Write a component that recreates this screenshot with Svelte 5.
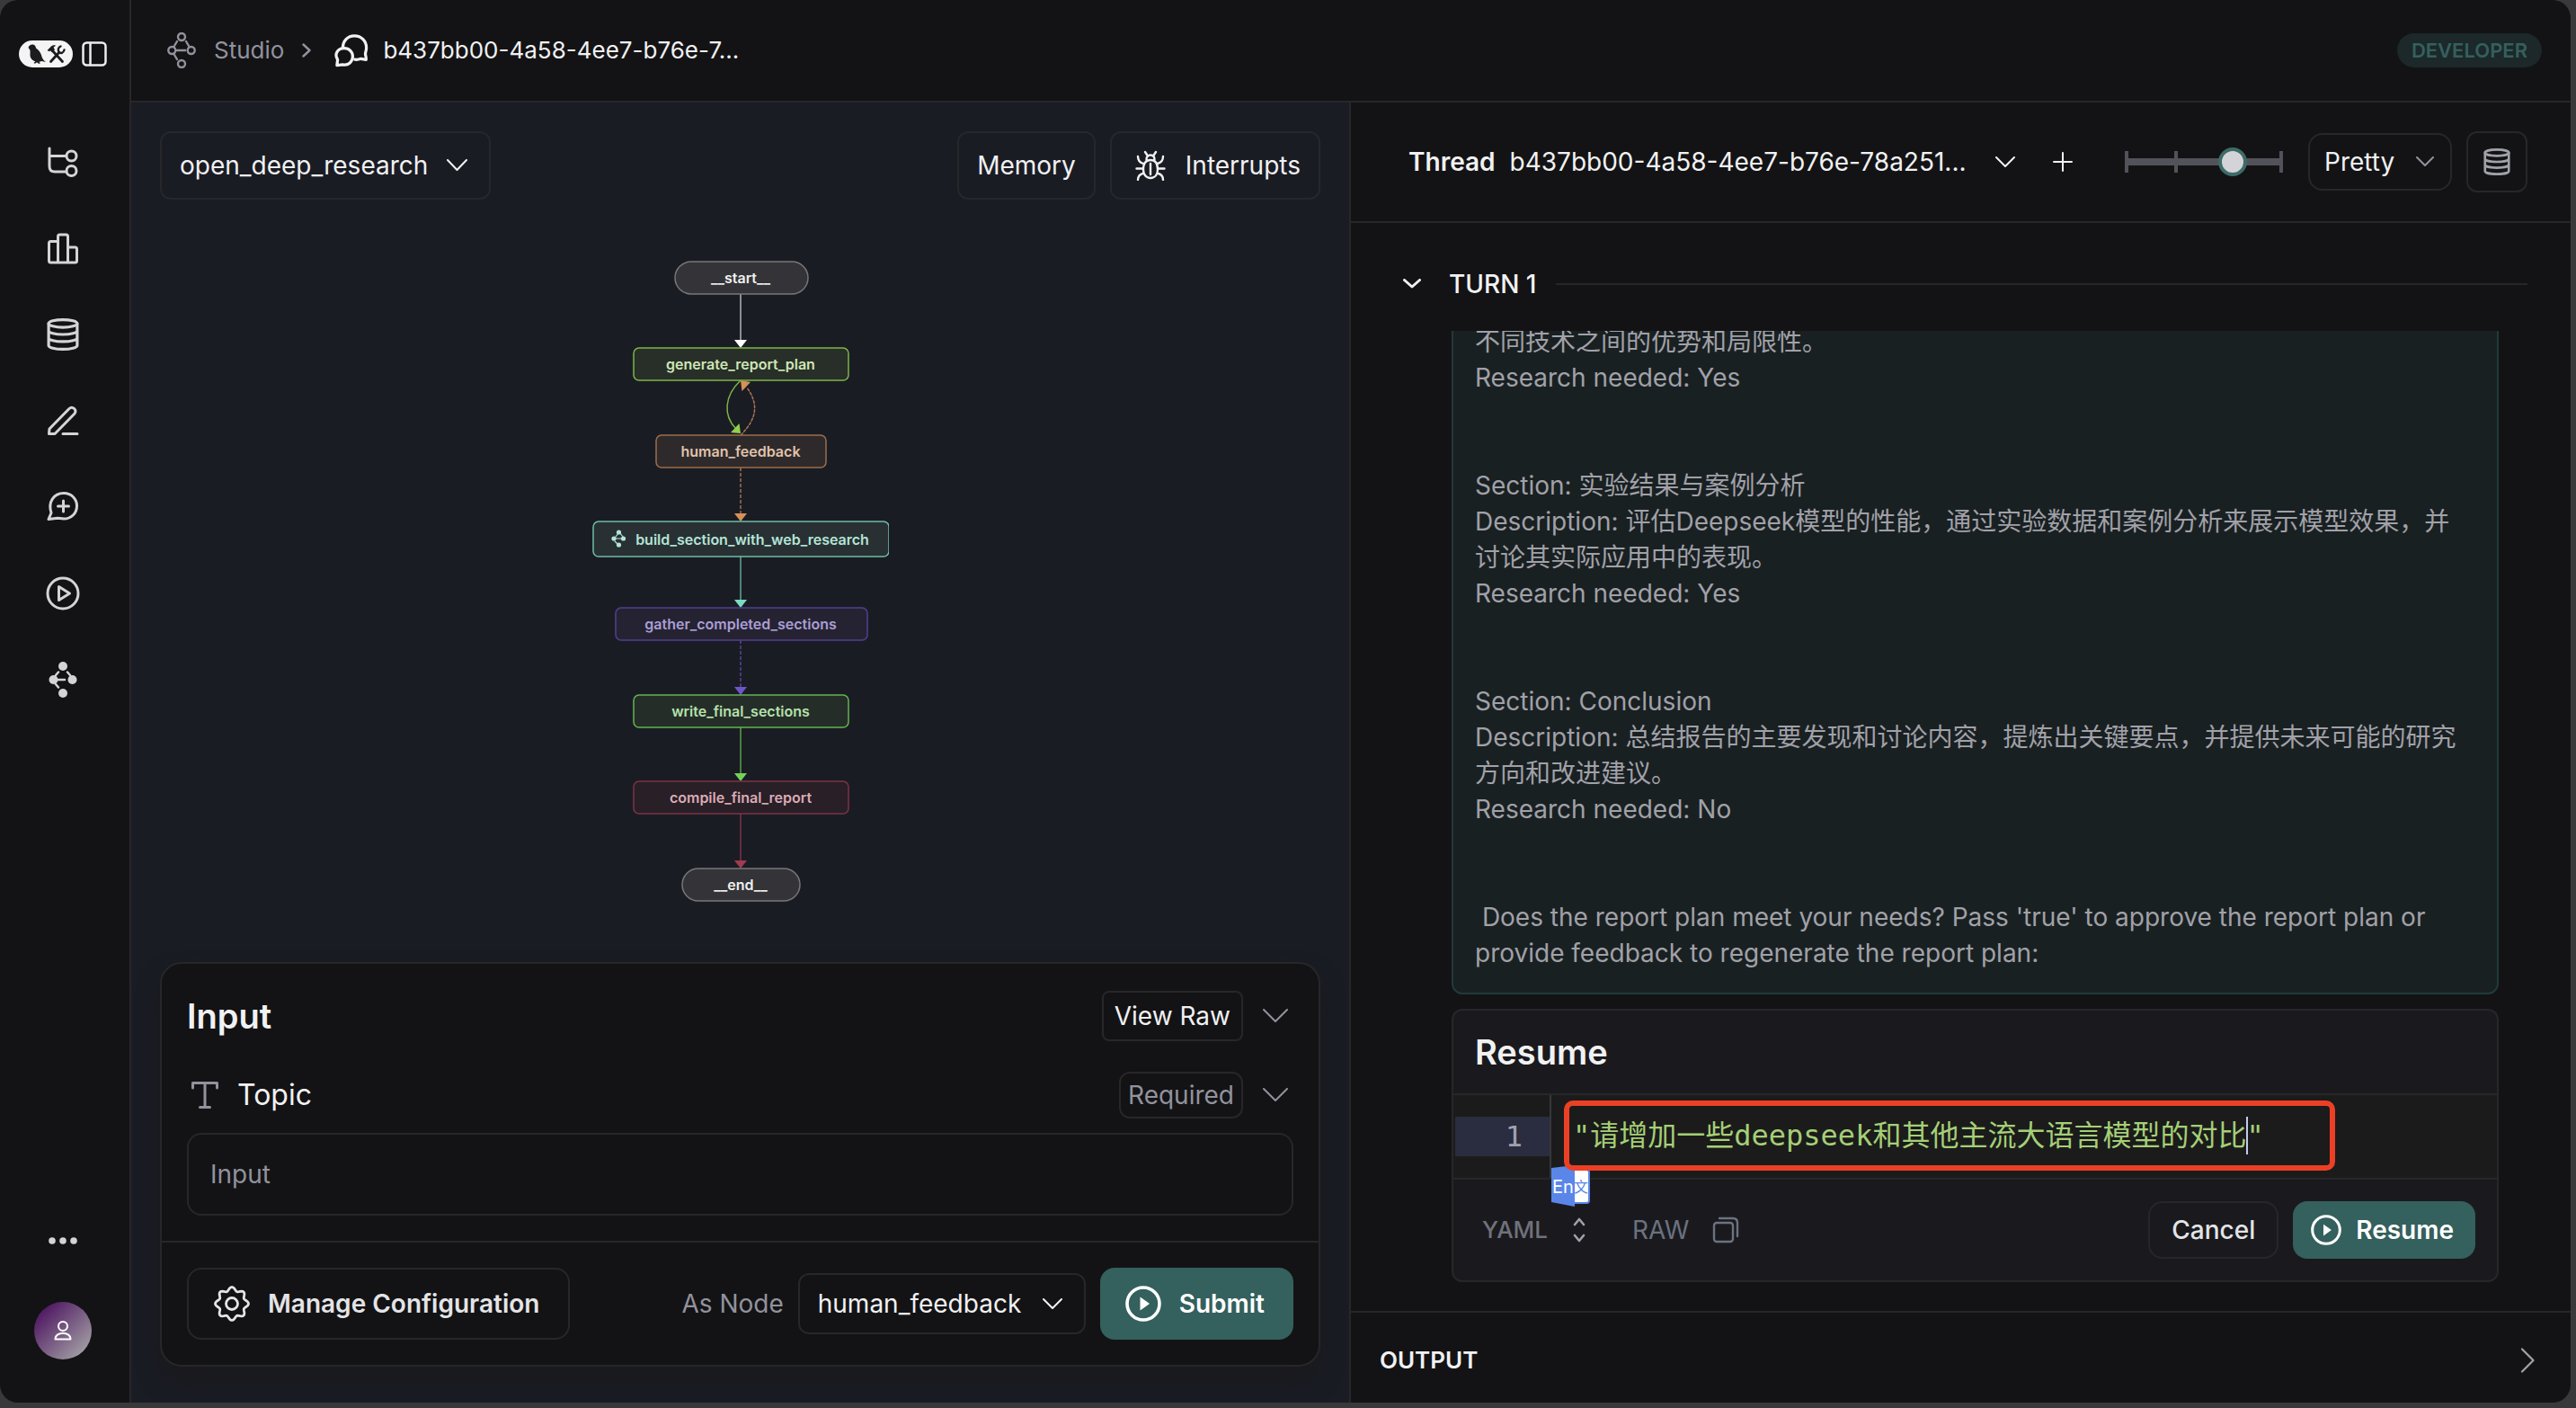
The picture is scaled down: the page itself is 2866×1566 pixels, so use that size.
<script lang="ts">
  type Node = { label: string; x: number; y: number; w: number; h: number; round?: boolean; line: string; fill: string; text: string };

  const nodes: Node[] = [
    { label: '__start__', x: 91, y: 11, w: 148, h: 36, round: true, line: '#77777a', fill: '#343438', text: '#f0f0f0' },
    { label: 'generate_report_plan', x: 45, y: 107, w: 239, h: 36, line: '#7cb545', fill: '#272f28', text: '#cfe6b4' },
    { label: 'human_feedback', x: 70, y: 204, w: 189, h: 36, line: '#9c6e4b', fill: '#2e2a2b', text: '#e0c3ac' },
    { label: 'build_section_with_web_research', x: 0, y: 300, w: 329, h: 39, line: '#6dbda6', fill: '#283034', text: '#b5e4d6' },
    { label: 'gather_completed_sections', x: 25, y: 396, w: 280, h: 36, line: '#513f92', fill: '#252331', text: '#ab9ed6' },
    { label: 'write_final_sections', x: 45, y: 493, w: 239, h: 36, line: '#64b44f', fill: '#252d29', text: '#b5e2a9' },
    { label: 'compile_final_report', x: 45, y: 589, w: 239, h: 36, line: '#7e3344', fill: '#281f27', text: '#dcabb5' },
    { label: '__end__', x: 99, y: 686, w: 131, h: 36, round: true, line: '#77777a', fill: '#343438', text: '#f0f0f0' }
  ];

  const edges = [
    { from: 47, to: 107, line: '#8d8d90', head: '#ffffff', dashed: false },
    { from: 240, to: 300, line: '#7d5b45', head: '#d59159', dashed: true },
    { from: 339, to: 396, line: '#4d8478', head: '#7dd9bf', dashed: false },
    { from: 432, to: 493, line: '#443a78', head: '#6f55cb', dashed: true },
    { from: 529, to: 589, line: '#48803d', head: '#72d35a', dashed: false },
    { from: 625, to: 686, line: '#652c3c', head: '#a03b50', dashed: false }
  ];

  const gear = Array.from({ length: 97 }, (_, i) => {
    const a = (i / 96) * Math.PI * 2;
    const r = 16.5 + 2 * Math.cos(8 * a);
    return `${i ? 'L' : 'M'}${(20 + r * Math.sin(a)).toFixed(2)} ${(20 - r * Math.cos(a)).toFixed(2)}`;
  }).join('') + 'Z';

  const message = `不同技术之间的优势和局限性。
Research needed: Yes


Section: 实验结果与案例分析
Description: 评估Deepseek模型的性能，通过实验数据和案例分析来展示模型效果，并
讨论其实际应用中的表现。
Research needed: Yes


Section: Conclusion
Description: 总结报告的主要发现和讨论内容，提炼出关键要点，并提供未来可能的研究
方向和改进建议。
Research needed: No


 Does the report plan meet your needs? Pass 'true' to approve the report plan or
provide feedback to regenerate the report plan:`;

  let topic = $state('');
  let detail = $state(72);
  let reply = $state('"请增加一些deepseek和其他主流大语言模型的对比"');
</script>

{#snippet chevron(w: number, h: number, s: number)}
  <svg class="chev" width={w} height={h} viewBox="0 0 {w} {h}" aria-hidden="true">
    <path d="M{s / 2} {s / 2}L{w / 2} {h - s}L{w - s / 2} {s / 2}" stroke-width={s} />
  </svg>
{/snippet}

{#snippet database(w: number, s: number)}
  <svg width={w} height={w} viewBox="0 0 34 34" stroke-width={s} aria-hidden="true">
    <ellipse cx="17" cy="5.5" rx="15" ry="4" />
    <path d="M2 5.5v23c0 2.2 6.700 4 15 4s15-1.800 15-4v-23M2 13c0 2.200 6.700 4 15 4s15-1.800 15-4M2 20.500c0 2.200 6.700 4 15 4s15-1.800 15-4" />
  </svg>
{/snippet}

{#snippet play(w: number)}
  <svg width={w} height={w} viewBox="0 0 40 40" stroke-width="3.6" aria-hidden="true">
    <circle cx="20" cy="20" r="18" />
    <path d="M16.500 12.500v15l10.500-7.500z" fill="currentColor" stroke="none" />
  </svg>
{/snippet}

<div class="app">
  <nav class="sidebar" aria-label="Main">
    <div class="brand">
      <svg width="60" height="30" viewBox="0 0 60 30" aria-label="LangSmith">
        <rect width="60" height="30" rx="15" fill="#f4f4f5" stroke="none" />
        <path d="M10.500 8c.7-2.600 3-4 5.300-3.500 2 .5 3 2 3.200 4 2.500 1.500 5.500 5 6.200 8.500.5 2.500 2 5 4.800 7l-4.500-1-2.800.7 1 2.300-2.200-.5-1.500-1.300-2 1.600-1.500-.8 1.800-1.800c-4-1.200-6-4-5.800-8 .1-2 .2-3.600-.3-5z" fill="#1c1c1e" stroke="none" />
        <path d="M37 11L48.500 23.500M35.500 23.500L45 13" stroke="#1c1c1e" stroke-width="2.800" />
        <path d="M31.500 11l4.500-4.500c1.500-1.300 3.500-1.500 5-.8l-2.500 2 1.500 2.500-3 3-2-2-1 1z" fill="#1c1c1e" stroke="none" />
        <path d="M46.500 6.500c-2.500 1-3.500 4-2 6.500 2 2 5 1 6-2.500" stroke="#1c1c1e" stroke-width="2.400" />
      </svg>
      <button class="bare" aria-label="Toggle sidebar">
        <svg width="28" height="28" viewBox="0 0 28 28" stroke-width="2.500"><rect x="1.500" y="1.500" width="25" height="25" rx="4" /><path d="M9.500 2v24" /></svg>
      </button>
    </div>
    <div class="links">
      <a href="#projects" aria-label="Tracing projects">
        <svg width="36" height="36" viewBox="0 0 36 36"><path d="M3 3v20c0 4 2 6 6 6h12M3 11.500h18" /><circle cx="27.500" cy="11.500" r="5.500" /><circle cx="27.500" cy="28" r="5.500" /></svg>
      </a>
      <a href="#monitoring" aria-label="Monitoring">
        <svg width="36" height="36" viewBox="0 0 36 36"><path d="M12.500 34H4.500Q2.500 34 2.500 32V12.500Q2.500 10.500 4.500 10.500H12.500M12.500 34V5Q12.500 3 14.500 3H21.500Q23.500 3 23.500 5V34M23.500 17H31.500Q33.500 17 33.500 19V32Q33.500 34 31.500 34H12.500" /></svg>
      </a>
      <a href="#datasets" aria-label="Datasets">{@render database(36, 3)}</a>
      <a href="#annotate" aria-label="Annotation queues">
        <svg width="36" height="36" viewBox="0 0 36 36"><path d="M3 27l22-22.500c3.500-3.300 9 1 6 5.500L9 32.500H2.500zM18 32.500h16" /></svg>
      </a>
      <a href="#prompts" aria-label="Prompts">
        <svg width="36" height="36" viewBox="0 0 36 36"><path d="M2 31.500l3-7C1 12 8 2.500 19 2.500c8.500 0 14.500 6.500 14.500 14.200C33.500 25 27 31 19 31c-3 0-5-.8-7-.8zM18.500 11v12M12.500 17h12" /></svg>
      </a>
      <a href="#playground" aria-label="Playground">
        <svg width="38" height="38" viewBox="0 0 38 38"><circle cx="19" cy="19" r="17" /><path d="M14.500 11.500v15l12-7.500z" /></svg>
      </a>
      <a href="#deployments" aria-label="Deployments">
        <svg width="32" height="40" viewBox="0 0 32 40"><g fill="currentColor" stroke="none"><circle cx="16" cy="5" r="5" /><circle cx="5.500" cy="20" r="5" /><circle cx="26.500" cy="20" r="5" /><circle cx="16" cy="35" r="5" /></g><path d="M8 15l3-3.500M24 15l-3-3.500M10 20h8M8 25l3 3.500" stroke-width="2.500" /></svg>
      </a>
    </div>
    <button class="bare more" aria-label="More">
      <svg width="32" height="10" viewBox="0 0 32 10"><g fill="currentColor" stroke="none"><circle cx="4" cy="5" r="3.800" /><circle cx="16" cy="5" r="3.800" /><circle cx="28" cy="5" r="3.800" /></g></svg>
    </button>
    <button class="bare avatar" aria-label="Account">
      <svg width="20" height="22" viewBox="0 0 20 22" stroke-width="2"><circle cx="10" cy="6" r="5" /><path d="M1.500 20.500c0-9 17-9 17 0z" /></svg>
    </button>
  </nav>

  <div class="body">
    <header class="top">
      <svg class="dim" width="32" height="40" viewBox="0 0 32 40" stroke-width="2.400" aria-hidden="true"><circle cx="16" cy="5" r="4" /><circle cx="5.300" cy="20" r="4" /><circle cx="26.700" cy="20" r="4" /><circle cx="16" cy="35" r="4" /><path d="M8 15l3-5M24 15l-3-5M11 20h9M8 25l3 5" /></svg>
      <a class="dim" href="#studio">Studio</a>
      <svg class="dim" width="10" height="16" viewBox="0 0 10 16" stroke-width="2.400" aria-hidden="true"><path d="M1.500 1.500L8.500 8l-7 6.500" /></svg>
      <svg class="chat" width="38" height="38" viewBox="0 0 40 40" stroke-width="3.400" aria-hidden="true"><path d="M10 16.500C10 9 15.500 3 23.500 3S37.500 9 37.500 17c0 3-1.200 5.500-1.200 7 0 2 1.200 4 .9 7l-6.200-1.200c-2 .8-4.500 1.200-7 .9" /><path d="M3 37.500l.8-6.500C-.5 24 4 17.500 11.500 17.500c6 0 10 4.500 10 9.700 0 6-5 10.800-11.500 9.500z" /></svg>
      <span>b437bb00-4a58-4ee7-b76e-7...</span>
      <span class="badge">DEVELOPER</span>
    </header>

    <main class="split">
      <section class="canvas" aria-label="Graph">
        <div class="tools">
          <div class="pick agent">
            <select aria-label="Assistant"><option>open_deep_research</option></select>
            {@render chevron(23, 14, 2)}
          </div>
          <button class="outline">Memory</button>
          <button class="outline bug">
            <svg width="34" height="34" viewBox="0 0 34 34" stroke-width="2.400" aria-hidden="true"><path d="M17 31c-5 0-8-4-8-9.500S11 11 17 11s8 5 8 10.500S22 31 17 31zM17 15v12M12.500 10.500c0-3.500 2-5 4.500-5s4.500 1.500 4.500 5M13 5l-2-3M21 5l2-3M9.500 15C5 14 3 12 3 7M24.500 15C29 14 31 12 31 7M9 20.500H1.500M25 20.500h7.500M9.500 25.500C5.500 26.500 3 29 3 33M24.500 25.500c4 1 6.500 3.500 6.500 7.500" /></svg>
            Interrupts
          </button>
        </div>

        <div class="graph">
          <svg width="330" height="724" viewBox="0 0 330 724" role="img" aria-label="Agent graph">
            {#each edges as e}
              <path d="M165 {e.from}V{e.to - 8}" stroke={e.line} stroke-width="2" stroke-linecap="butt" stroke-dasharray={e.dashed ? '4 2' : undefined} />
              <path d="M158 {e.to - 9}h14l-7 9z" fill={e.head} stroke="none" />
            {/each}
            <path d="M165 143C147 160 145 182 160 197" stroke="#7cb545" stroke-width="1.500" />
            <path d="M165 202l-11-1 9.500-10z" fill="#93cf4f" stroke="none" />
            <path d="M165 204C185 184 184 168 172 151" stroke="#a87550" stroke-width="1.500" stroke-dasharray="3 2" />
            <path d="M165 143l11 2-9.500 10z" fill="#d59159" stroke="none" />
            {#each nodes as n}
              <rect x={n.x + 1} y={n.y} width={n.w} height={n.h} rx={n.round ? 18 : 6} fill={n.fill} stroke={n.line} stroke-width="1.500" />
              <text x={n.w > 320 ? 178 : 165} y={n.y + n.h / 2 + 6} fill={n.text}>{n.label}</text>
            {/each}
            <g stroke="#b5e4d6" stroke-width="1.200"><path d="M26 317l3-4M34 317l-3-4M26 319h6M25 322l4 4" /><g fill="#b5e4d6" stroke="none"><circle cx="29.500" cy="312" r="2.600" /><circle cx="24" cy="319" r="2.600" /><circle cx="34.500" cy="319" r="2.600" /><circle cx="29.500" cy="326" r="2.600" /></g></g>
          </svg>
        </div>

        <form class="card">
          <div class="fields">
            <div class="row head">
              <h2>Input</h2>
              <button type="button" class="outline raw">View Raw</button>
              <button type="button" class="bare dim" aria-label="Collapse input">{@render chevron(28, 16, 2)}</button>
            </div>
            <div class="row sub">
              <svg class="dim" width="38" height="34" viewBox="0 0 38 34" stroke-width="3" aria-hidden="true"><path d="M6.500 9V3.500h27V9M20 3.500v27M14.500 30.500h11" /></svg>
              <label for="topic">Topic</label>
              <span class="required">Required</span>
              <button type="button" class="bare dim" aria-label="Collapse topic">{@render chevron(28, 16, 2)}</button>
            </div>
            <input id="topic" class="topic" placeholder="Input" bind:value={topic} />
          </div>
          <div class="actions">
            <button type="button" class="outline manage">
              <svg width="40" height="40" viewBox="0 0 40 40" stroke-width="2.800" aria-hidden="true"><path d={gear} /><circle cx="20" cy="20" r="6.500" /></svg>
              Manage Configuration
            </button>
            <label class="dim asnode" for="asnode">As Node</label>
            <div class="pick node">
              <select id="asnode"><option>human_feedback</option></select>
              {@render chevron(22, 13, 2)}
            </div>
            <button type="button" class="primary submit">{@render play(40)}Submit</button>
          </div>
        </form>
      </section>

      <section class="thread" aria-label="Thread">
        <div class="threadbar">
          <strong>Thread</strong>
          <button class="bare idpick">b437bb00-4a58-4ee7-b76e-78a251...{@render chevron(22, 13, 2)}</button>
          <button class="bare plus" aria-label="New thread">
            <svg width="22" height="22" viewBox="0 0 22 22" stroke-width="2"><path d="M11 1v20M1 11h20" /></svg>
          </button>
          <input class="range" type="range" min="0" max="100" aria-label="Detail level" bind:value={detail} />
          <div class="pick pretty">
            <select aria-label="Format"><option>Pretty</option></select>
            <span class="dim">{@render chevron(20, 12, 2)}</span>
          </div>
          <button class="outline db" aria-label="Store">{@render database(30, 3)}</button>
        </div>

        <div class="turn">
          <button class="bare">{@render chevron(20, 12, 3)}TURN 1</button>
          <hr />
        </div>

        <div class="scroll">
          <div class="message">{message}</div>
          <div class="resume">
            <h2>Resume</h2>
            <div class="editor">
              <div class="gutter"><span>1</span></div>
              <div class="code">
                <svg class="translate" width="43" height="46" viewBox="0 0 43 46" aria-hidden="true">
                  <rect x="18" y="5" width="24" height="37" rx="3" fill="#fff" stroke="#5a86ea" stroke-width="2" />
                  <path d="M0 3L26 0V46L0 41z" fill="#5a86ea" stroke="none" />
                  <text x="13" y="31" fill="#fff" font-size="20">En</text>
                  <text x="33" y="30" fill="#5a86ea" font-size="16">文</text>
                </svg>
                <div class="mark">
                  <input aria-label="Resume value" spellcheck="false" bind:value={reply} />
                  <i class="caret"></i>
                </div>
              </div>
            </div>
            <div class="foot">
              <div class="yaml">
                <select aria-label="Language"><option>YAML</option></select>
                <svg width="14" height="28" viewBox="0 0 14 28" stroke-width="2.600" aria-hidden="true"><path d="M2 8l5-6 5 6M2 20l5 6 5-6" /></svg>
              </div>
              <button class="bare copy">RAW
                <svg width="30" height="30" viewBox="0 0 30 30" stroke-width="2.400" aria-hidden="true"><rect x="2" y="7" width="21" height="21" rx="3" /><path d="M8 2h15q5 0 5 5v15" /></svg>
              </button>
              <button class="outline cancel">Cancel</button>
              <button class="primary go">{@render play(34)}Resume</button>
            </div>
          </div>
        </div>

        <button class="bare output">OUTPUT
          <svg width="16" height="28" viewBox="0 0 16 28" stroke-width="2.200" aria-hidden="true"><path d="M2 1.500L14.500 14 2 26.500" /></svg>
        </button>
      </section>
    </main>
  </div>
</div>

<style>
  :global(body) { background: #39393b; }
  * { box-sizing: border-box; }
  .app {
    --line: #27272a;
    --dim: #92929d;
    display: flex;
    height: calc(100vh - 6px);
    margin-right: 6px;
    background: #131315;
    border-radius: 20px;
    overflow: hidden;
    color: #f1f1f2;
    font: 28px/40px Inter, "Noto Sans CJK SC", sans-serif;
  }
  svg { display: block; flex: none; fill: none; stroke: currentColor; stroke-linecap: round; stroke-linejoin: round; }
  button, input, select { font: inherit; color: inherit; margin: 0; }
  button { white-space: nowrap; }
  select { appearance: none; border: 0; background: transparent; padding: 0; }
  a { color: inherit; text-decoration: none; }
  h2 { margin: 0; font-size: 38px; line-height: 48px; font-weight: 600; }
  .bare { border: 0; background: transparent; padding: 0; display: flex; align-items: center; }
  .dim { color: var(--dim); }
  .outline { display: flex; align-items: center; justify-content: center; border: 2px solid var(--line); border-radius: 12px; background: transparent; }
  .primary { display: flex; align-items: center; justify-content: center; border: 0; border-radius: 16px; background: #34605d; color: #fff; font-weight: 600; }
  .pick { display: flex; align-items: center; justify-content: space-between; border: 2px solid var(--line); border-radius: 12px; }

  .sidebar { flex: none; width: 146px; border-right: 2px solid var(--line); display: flex; flex-direction: column; padding: 45px 4px 48px 0; align-items: center; color: #d4d4d8; }
  .brand { display: flex; align-items: center; gap: 10px; }
  .brand .bare { color: #ededee; }
  .links { display: flex; flex-direction: column; gap: 56px; margin-top: 85px; }
  .links a { display: flex; width: 40px; height: 40px; align-items: center; justify-content: center; }
  .links svg { stroke-width: 3; }
  .more { margin-top: auto; }
  .avatar { width: 64px; height: 64px; margin-top: 63px; border-radius: 50%; justify-content: center; color: #fff; background: linear-gradient(135deg, #4c1360 10%, #a3a0a5 90%); }

  .body { flex: 1; min-width: 0; display: flex; flex-direction: column; }
  .top { flex: none; height: 114px; border-bottom: 2px solid var(--line); display: flex; align-items: center; gap: 20px; padding: 0 32px 0 40px; font-size: 26px; }
  .chat { margin-left: 6px; }
  .chat + span { margin-left: -4px; }
  .badge { margin-left: auto; padding: 0 16px; border-radius: 19px; background: #1c2829; color: #34605d; font-size: 22px; line-height: 38px; font-weight: 600; }

  .split { flex: 1; min-height: 0; display: grid; grid-template: minmax(0, 1fr) / repeat(2, minmax(0, 1fr)); }
  .canvas { display: flex; flex-direction: column; padding: 32px 32px 40px; border-right: 2px solid var(--line); background: #1a1c24; }
  .tools { display: flex; gap: 16px; }
  .tools > * { height: 76px; }
  .agent { width: 368px; padding: 0 24px 0 20px; margin-right: auto; }
  .tools .outline { padding: 0 20px; }
  .bug { gap: 22px; }
  .tools .bug { padding-left: 26px; }
  .graph { flex: 1; display: flex; justify-content: center; padding-top: 58px; min-height: 0; }
  .graph text { stroke: none; font-size: 16px; line-height: 20px; font-weight: 600; text-anchor: middle; }

  .card { flex: none; border: 2px solid var(--line); border-radius: 24px; background: #131315; box-shadow: 0 16px 24px #1a1a1d; }
  .fields { padding: 30px 28px 28px; display: flex; flex-direction: column; border-bottom: 2px solid var(--line); }
  .row { display: flex; align-items: center; padding-right: 6px; }
  .row > .bare { margin-left: 22px; }
  .head { height: 56px; }
  .head h2 { margin-right: auto; }
  .raw { height: 56px; padding: 0 12px; border-radius: 8px; }
  .sub { height: 52px; margin: 34px 0 16px; }
  .sub label { margin: 0 auto 0 18px; font-size: 32px; }
  .required { border: 2px solid var(--line); border-radius: 12px; height: 52px; line-height: 48px; padding: 0 8px; color: var(--dim); }
  .topic { width: 100%; height: 92px; border: 2px solid var(--line); border-radius: 16px; background: transparent; padding: 0 24px; }
  .topic::placeholder { color: var(--dim); }
  .actions { display: flex; align-items: center; padding: 28px; gap: 16px; }
  .manage { height: 80px; padding: 0 32px 0 28px; gap: 20px; border-radius: 16px; font-weight: 600; color: #e4e4e6; }
  .asnode { margin-left: auto; }
  .node { height: 68px; width: 320px; padding: 0 24px 0 20px; }
  .submit { height: 80px; padding: 0 32px 0 28px; gap: 20px; }

  .thread { display: flex; flex-direction: column; }
  .threadbar { flex: none; height: 134px; border-bottom: 2px solid var(--line); display: flex; align-items: center; padding: 0 48px 0 64px; gap: 16px; }
  .threadbar strong { font-weight: 600; }
  .idpick { gap: 32px; }
  .plus { margin-left: 26px; }
  .range {
    appearance: none; width: 176px; height: 32px; margin: 0 12px 0 auto;
    background:
      linear-gradient(#52525b, #52525b) 0 4px / 4px 24px no-repeat,
      linear-gradient(#52525b, #52525b) 55px 4px / 4px 24px no-repeat,
      linear-gradient(#52525b, #52525b) 172px 4px / 4px 24px no-repeat,
      linear-gradient(#52525b, #52525b) 0 12px / 176px 8px no-repeat;
  }
  .range::-webkit-slider-thumb { appearance: none; width: 32px; height: 32px; border: 4px solid #3d6b68; border-radius: 50%; background: #d4d4d8; }
  .pretty { height: 64px; width: 160px; padding: 0 18px 0 16px; border-radius: 16px; }
  .db { width: 68px; height: 68px; color: #a1a1aa; padding: 0; }

  .turn { flex: none; display: flex; align-items: center; gap: 22px; margin: 48px 48px 32px 58px; }
  .turn button { gap: 31px; font-weight: 500; }
  .turn hr { flex: 1; margin: 0; border: 0; border-top: 2px solid var(--line); }
  .scroll { flex: 1; min-height: 0; overflow: hidden; display: flex; flex-direction: column; justify-content: flex-end; gap: 16px; padding: 0 80px 32px 112px; }
  .message { flex: none; padding: 24px; border: 2px solid #213a3b; border-radius: 12px; background: #192022; color: #a1a1a8; white-space: pre-wrap; }
  .resume { flex: none; border: 2px solid var(--line); border-radius: 12px; background: #1a1a1e; }
  .resume h2 { padding: 22px 24px; }
  .editor { display: flex; height: 96px; border: solid var(--line); border-width: 2px 0; background: #1b1b1b; }
  .gutter { width: 109px; padding: 24px 0 0 2px; border-right: 2px solid #37373a; }
  .gutter span { display: block; height: 44px; padding-right: 30px; background: #2a2c3f; color: #a1a1ad; text-align: right; font: 32px/44px "DejaVu Sans Mono", monospace; }
  .code { position: relative; flex: 1; padding: 6px 0 0 14px; }
  .mark { position: relative; width: 858px; height: 78px; border: 6px solid #ec4026; border-radius: 10px; }
  .mark input { width: 100%; height: 66px; border: 0; padding: 0 4px; background: transparent; color: #a5cf77; font: 32px/66px "DejaVu Sans Mono", "Noto Sans CJK SC", monospace; }
  .caret { position: absolute; left: 753px; top: 12px; width: 2px; height: 42px; background: #c3c9f3; }
  .translate { position: absolute; left: 0; top: 78px; }
  .translate text { stroke: none; text-anchor: middle; }
  .foot { display: flex; align-items: center; padding: 24px; gap: 16px; }
  .yaml { display: flex; align-items: center; gap: 27px; margin-left: 8px; color: #a1a1aa; }
  .yaml select { color: #71717a; font-size: 26px; font-weight: 500; }
  .copy { gap: 26px; margin: 0 auto 0 36px; color: #6b7280; }
  .cancel { height: 64px; padding: 0 24px; border-radius: 16px; font-weight: 500; color: #e4e4e6; }
  .go { height: 64px; padding: 0 24px 0 20px; gap: 16px; }
  .output { flex: none; height: 102px; border-top: 2px solid var(--line); justify-content: space-between; padding: 6px 40px 0 32px; font-size: 26px; font-weight: 600; }
  .output svg { color: #a1a1aa; }
</style>
